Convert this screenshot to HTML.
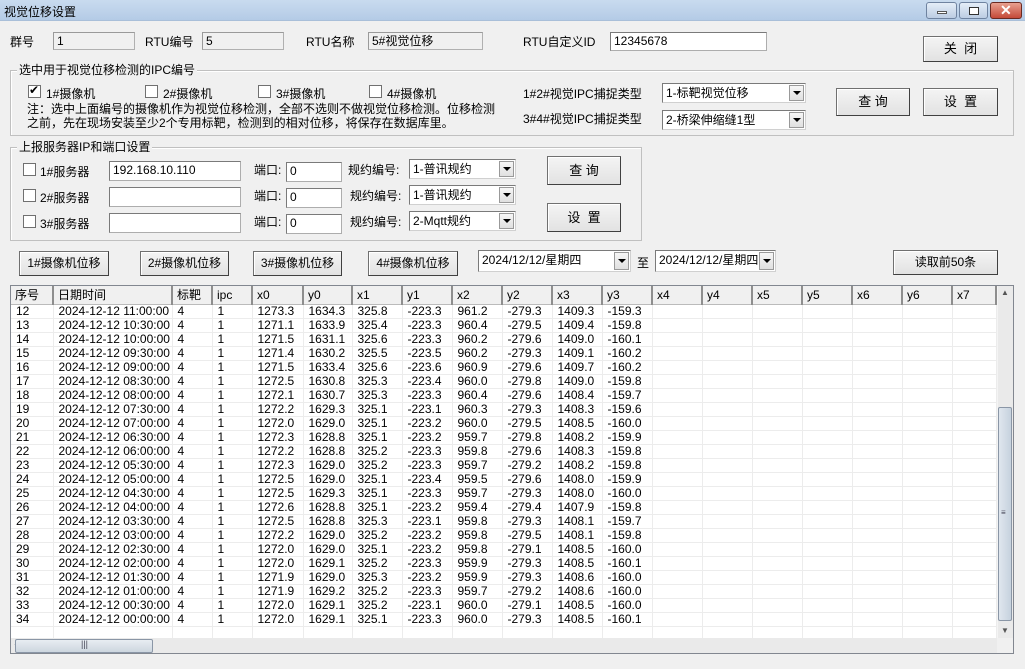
<!DOCTYPE html>
<html><head><meta charset="utf-8">
<style>
*{box-sizing:border-box;margin:0;padding:0}
body{width:1025px;height:669px;background:#f0f0f0;font-family:"Liberation Sans","Noto Sans CJK SC",sans-serif;font-size:12px;color:#000;position:relative;overflow:hidden}
.a{position:absolute;white-space:nowrap}
.title{left:0;top:0;width:1025px;height:21px;background:linear-gradient(#c9dbef,#b4cbe6);border-bottom:1px solid #a9bfd9}
.inp{position:absolute;background:#fff;border:1px solid #adadad;border-top-color:#7a7a7a;border-left-color:#7a7a7a;padding:2px 3px;line-height:13px;font-size:12px}
.ro{background:#f0f0f0;border:1px solid #b0b0b0;border-top-color:#9a9a9a;border-left-color:#9a9a9a}
.btn{position:absolute;background:linear-gradient(#f4f4f4,#e2e2e2);border:1px solid #707070;border-right-color:#404040;border-bottom-color:#404040;box-shadow:inset 1px 1px 0 #fff;text-align:center;font-size:13px}
.grp{position:absolute;border:1px solid #c0c0c0;box-shadow:inset 1px 1px 0 #fff}
.glab{position:absolute;background:#f0f0f0;padding:0 2px;top:-8px;left:6px;font-size:12px;line-height:14px}
.cb{position:absolute;width:13px;height:13px;background:#fff;border:1px solid #707070}
.sel{position:absolute;background:#fff;border:1px solid #7a7a7a;border-right-color:#d0d0d0;border-bottom-color:#d0d0d0;padding:2px 3px;line-height:14px}
.sel .dd{position:absolute;right:1px;top:1px;bottom:1px;width:15px;background:linear-gradient(#f6f6f6,#e0e0e0);border:1px solid #999}
.sel .dd svg{position:absolute;left:3px;top:50%;margin-top:-2px}
table{border-collapse:collapse;table-layout:fixed;position:absolute;left:11px;top:286px;font-size:12px}
th{height:18px;font-weight:normal;text-align:left;padding-left:4px;background:#f0f0f0;border-right:2px solid #8e8e8e;border-bottom:1px solid #bbb;line-height:16px}
td{height:14px;padding-left:5px;line-height:13px;border-right:1px solid #ececec;border-bottom:1px solid #ececec;background:#fff;white-space:nowrap;overflow:hidden}
</style></head><body>
<div class="a title"><span class="a" style="left:4px;top:3px;font-size:12px">视觉位移设置</span>
<div class="a" style="left:926px;top:2px;width:31px;height:17px;border:1px solid #6f83a0;border-radius:3px;background:linear-gradient(#e4edf8,#bccde3)"><div class="a" style="left:10px;top:8px;width:10px;height:3px;background:#fff;border:1px solid #555"></div></div>
<div class="a" style="left:959px;top:2px;width:29px;height:17px;border:1px solid #6f83a0;border-radius:3px;background:linear-gradient(#e4edf8,#bccde3)"><div class="a" style="left:9px;top:4px;width:10px;height:8px;border:1px solid #333;background:#fff"></div></div>
<div class="a" style="left:990px;top:2px;width:32px;height:17px;border:1px solid #6a2a22;border-radius:3px;background:linear-gradient(#e8a090,#c44a38)"><span class="a" style="left:9px;top:-1px;color:#fff;font-weight:bold;font-size:14px">✕</span></div>
</div>

<span class="a" style="left:10px;top:33px">群号</span>
<div class="inp ro" style="left:53px;top:32px;width:82px;height:18px">1</div>
<span class="a" style="left:145px;top:33px">RTU编号</span>
<div class="inp ro" style="left:202px;top:32px;width:82px;height:18px">5</div>
<span class="a" style="left:306px;top:33px">RTU名称</span>
<div class="inp ro" style="left:368px;top:32px;width:115px;height:18px">5#视觉位移</div>
<span class="a" style="left:523px;top:33px">RTU自定义ID</span>
<div class="inp" style="left:610px;top:32px;width:157px;height:19px">12345678</div>
<div class="btn" style="left:923px;top:36px;width:75px;height:26px;line-height:23px">关&nbsp;&nbsp;闭</div>

<div class="grp" style="left:10px;top:70px;width:1004px;height:66px"><span class="glab">选中用于视觉位移检测的IPC编号</span></div>
<div class="cb" style="left:28px;top:85px"><span class="a" style="left:0;top:-3px;font-size:12px">✔</span></div><span class="a" style="left:46px;top:85px">1#摄像机</span>
<div class="cb" style="left:145px;top:85px"></div><span class="a" style="left:163px;top:85px">2#摄像机</span>
<div class="cb" style="left:258px;top:85px"></div><span class="a" style="left:276px;top:85px">3#摄像机</span>
<div class="cb" style="left:369px;top:85px"></div><span class="a" style="left:387px;top:85px">4#摄像机</span>
<span class="a" style="left:27px;top:102px;line-height:14px">注：选中上面编号的摄像机作为视觉位移检测，全部不选则不做视觉位移检测。位移检测<br>之前，先在现场安装至少2个专用标靶，检测到的相对位移，将保存在数据库里。</span>
<span class="a" style="left:523px;top:85px">1#2#视觉IPC捕捉类型</span>
<span class="a" style="left:523px;top:110px">3#4#视觉IPC捕捉类型</span>
<div class="sel" style="left:662px;top:83px;width:144px;height:20px">1-标靶视觉位移<div class="dd"><svg width="8" height="4"><path d="M0 0H8L4 4Z"/></svg></div></div>
<div class="sel" style="left:662px;top:110px;width:144px;height:20px">2-桥梁伸缩缝1型<div class="dd"><svg width="8" height="4"><path d="M0 0H8L4 4Z"/></svg></div></div>
<div class="btn" style="left:836px;top:88px;width:74px;height:28px;line-height:26px">查&nbsp;询</div>
<div class="btn" style="left:923px;top:88px;width:75px;height:28px;line-height:26px">设&nbsp;&nbsp;置</div>

<div class="grp" style="left:10px;top:147px;width:632px;height:94px"><span class="glab">上报服务器IP和端口设置</span></div>
<div class="cb" style="left:23px;top:163px"></div><span class="a" style="left:40px;top:163px">1#服务器</span>
<div class="cb" style="left:23px;top:189px"></div><span class="a" style="left:40px;top:189px">2#服务器</span>
<div class="cb" style="left:23px;top:215px"></div><span class="a" style="left:40px;top:215px">3#服务器</span>
<div class="inp" style="left:109px;top:161px;width:132px;height:20px">192.168.10.110</div>
<div class="inp" style="left:109px;top:187px;width:132px;height:20px"></div>
<div class="inp" style="left:109px;top:213px;width:132px;height:20px"></div>
<span class="a" style="left:254px;top:161px">端口:</span><div class="inp" style="left:286px;top:162px;width:56px;height:20px">0</div>
<span class="a" style="left:254px;top:187px">端口:</span><div class="inp" style="left:286px;top:188px;width:56px;height:20px">0</div>
<span class="a" style="left:254px;top:213px">端口:</span><div class="inp" style="left:286px;top:214px;width:56px;height:20px">0</div>
<span class="a" style="left:348px;top:161px">规约编号:</span><div class="sel" style="left:409px;top:159px;width:107px;height:20px">1-普讯规约<div class="dd"><svg width="8" height="4"><path d="M0 0H8L4 4Z"/></svg></div></div>
<span class="a" style="left:350px;top:187px">规约编号:</span><div class="sel" style="left:409px;top:185px;width:107px;height:20px">1-普讯规约<div class="dd"><svg width="8" height="4"><path d="M0 0H8L4 4Z"/></svg></div></div>
<span class="a" style="left:350px;top:213px">规约编号:</span><div class="sel" style="left:409px;top:211px;width:107px;height:20px">2-Mqtt规约<div class="dd"><svg width="8" height="4"><path d="M0 0H8L4 4Z"/></svg></div></div>
<div class="btn" style="left:547px;top:156px;width:74px;height:29px;line-height:27px">查&nbsp;询</div>
<div class="btn" style="left:547px;top:203px;width:74px;height:29px;line-height:27px">设&nbsp;&nbsp;置</div>

<div class="btn" style="left:19px;top:251px;width:90px;height:25px;line-height:23px;font-size:12px">1#摄像机位移</div>
<div class="btn" style="left:140px;top:251px;width:89px;height:25px;line-height:23px;font-size:12px">2#摄像机位移</div>
<div class="btn" style="left:253px;top:251px;width:89px;height:25px;line-height:23px;font-size:12px">3#摄像机位移</div>
<div class="btn" style="left:368px;top:251px;width:90px;height:25px;line-height:23px;font-size:12px">4#摄像机位移</div>
<div class="sel" style="left:478px;top:250px;width:153px;height:22px">2024/12/12/星期四<div class="dd"><svg width="8" height="4"><path d="M0 0H8L4 4Z"/></svg></div></div>
<span class="a" style="left:637px;top:254px">至</span>
<div class="sel" style="left:655px;top:250px;width:121px;height:22px">2024/12/12/星期四<div class="dd"><svg width="8" height="4"><path d="M0 0H8L4 4Z"/></svg></div></div>
<div class="btn" style="left:893px;top:250px;width:105px;height:25px;line-height:23px;font-size:12px">读取前50条</div>

<div class="a" style="left:10px;top:285px;width:1004px;height:369px;border:1px solid #828790;background:#fff"></div>
<table>
<colgroup><col style="width:42px"><col style="width:119px"><col style="width:40px"><col style="width:40px"><col style="width:51px"><col style="width:49px"><col style="width:50px"><col style="width:50px"><col style="width:50px"><col style="width:50px"><col style="width:50px"><col style="width:50px"><col style="width:50px"><col style="width:50px"><col style="width:50px"><col style="width:50px"><col style="width:50px"><col style="width:50px"><col style="width:44px"></colgroup>
<tr><th>序号</th><th>日期时间</th><th>标靶</th><th>ipc</th><th>x0</th><th>y0</th><th>x1</th><th>y1</th><th>x2</th><th>y2</th><th>x3</th><th>y3</th><th>x4</th><th>y4</th><th>x5</th><th>y5</th><th>x6</th><th>y6</th><th>x7</th></tr>
<tr><td>12</td><td>2024-12-12 11:00:00</td><td>4</td><td>1</td><td>1273.3</td><td>1634.3</td><td>325.8</td><td>-223.3</td><td>961.2</td><td>-279.3</td><td>1409.3</td><td>-159.3</td><td></td><td></td><td></td><td></td><td></td><td></td><td></td></tr>
<tr><td>13</td><td>2024-12-12 10:30:00</td><td>4</td><td>1</td><td>1271.1</td><td>1633.9</td><td>325.4</td><td>-223.3</td><td>960.4</td><td>-279.5</td><td>1409.4</td><td>-159.8</td><td></td><td></td><td></td><td></td><td></td><td></td><td></td></tr>
<tr><td>14</td><td>2024-12-12 10:00:00</td><td>4</td><td>1</td><td>1271.5</td><td>1631.1</td><td>325.6</td><td>-223.3</td><td>960.2</td><td>-279.6</td><td>1409.0</td><td>-160.1</td><td></td><td></td><td></td><td></td><td></td><td></td><td></td></tr>
<tr><td>15</td><td>2024-12-12 09:30:00</td><td>4</td><td>1</td><td>1271.4</td><td>1630.2</td><td>325.5</td><td>-223.5</td><td>960.2</td><td>-279.3</td><td>1409.1</td><td>-160.2</td><td></td><td></td><td></td><td></td><td></td><td></td><td></td></tr>
<tr><td>16</td><td>2024-12-12 09:00:00</td><td>4</td><td>1</td><td>1271.5</td><td>1633.4</td><td>325.6</td><td>-223.6</td><td>960.9</td><td>-279.6</td><td>1409.7</td><td>-160.2</td><td></td><td></td><td></td><td></td><td></td><td></td><td></td></tr>
<tr><td>17</td><td>2024-12-12 08:30:00</td><td>4</td><td>1</td><td>1272.5</td><td>1630.8</td><td>325.3</td><td>-223.4</td><td>960.0</td><td>-279.8</td><td>1409.0</td><td>-159.8</td><td></td><td></td><td></td><td></td><td></td><td></td><td></td></tr>
<tr><td>18</td><td>2024-12-12 08:00:00</td><td>4</td><td>1</td><td>1272.1</td><td>1630.7</td><td>325.3</td><td>-223.3</td><td>960.4</td><td>-279.6</td><td>1408.4</td><td>-159.7</td><td></td><td></td><td></td><td></td><td></td><td></td><td></td></tr>
<tr><td>19</td><td>2024-12-12 07:30:00</td><td>4</td><td>1</td><td>1272.2</td><td>1629.3</td><td>325.1</td><td>-223.1</td><td>960.3</td><td>-279.3</td><td>1408.3</td><td>-159.6</td><td></td><td></td><td></td><td></td><td></td><td></td><td></td></tr>
<tr><td>20</td><td>2024-12-12 07:00:00</td><td>4</td><td>1</td><td>1272.0</td><td>1629.0</td><td>325.1</td><td>-223.2</td><td>960.0</td><td>-279.5</td><td>1408.5</td><td>-160.0</td><td></td><td></td><td></td><td></td><td></td><td></td><td></td></tr>
<tr><td>21</td><td>2024-12-12 06:30:00</td><td>4</td><td>1</td><td>1272.3</td><td>1628.8</td><td>325.1</td><td>-223.2</td><td>959.7</td><td>-279.8</td><td>1408.2</td><td>-159.9</td><td></td><td></td><td></td><td></td><td></td><td></td><td></td></tr>
<tr><td>22</td><td>2024-12-12 06:00:00</td><td>4</td><td>1</td><td>1272.2</td><td>1628.8</td><td>325.2</td><td>-223.3</td><td>959.8</td><td>-279.6</td><td>1408.3</td><td>-159.8</td><td></td><td></td><td></td><td></td><td></td><td></td><td></td></tr>
<tr><td>23</td><td>2024-12-12 05:30:00</td><td>4</td><td>1</td><td>1272.3</td><td>1629.0</td><td>325.2</td><td>-223.3</td><td>959.7</td><td>-279.2</td><td>1408.2</td><td>-159.8</td><td></td><td></td><td></td><td></td><td></td><td></td><td></td></tr>
<tr><td>24</td><td>2024-12-12 05:00:00</td><td>4</td><td>1</td><td>1272.5</td><td>1629.0</td><td>325.1</td><td>-223.4</td><td>959.5</td><td>-279.6</td><td>1408.0</td><td>-159.9</td><td></td><td></td><td></td><td></td><td></td><td></td><td></td></tr>
<tr><td>25</td><td>2024-12-12 04:30:00</td><td>4</td><td>1</td><td>1272.5</td><td>1629.3</td><td>325.1</td><td>-223.3</td><td>959.7</td><td>-279.3</td><td>1408.0</td><td>-160.0</td><td></td><td></td><td></td><td></td><td></td><td></td><td></td></tr>
<tr><td>26</td><td>2024-12-12 04:00:00</td><td>4</td><td>1</td><td>1272.6</td><td>1628.8</td><td>325.1</td><td>-223.2</td><td>959.4</td><td>-279.4</td><td>1407.9</td><td>-159.8</td><td></td><td></td><td></td><td></td><td></td><td></td><td></td></tr>
<tr><td>27</td><td>2024-12-12 03:30:00</td><td>4</td><td>1</td><td>1272.5</td><td>1628.8</td><td>325.3</td><td>-223.1</td><td>959.8</td><td>-279.3</td><td>1408.1</td><td>-159.7</td><td></td><td></td><td></td><td></td><td></td><td></td><td></td></tr>
<tr><td>28</td><td>2024-12-12 03:00:00</td><td>4</td><td>1</td><td>1272.2</td><td>1629.0</td><td>325.2</td><td>-223.2</td><td>959.8</td><td>-279.5</td><td>1408.1</td><td>-159.8</td><td></td><td></td><td></td><td></td><td></td><td></td><td></td></tr>
<tr><td>29</td><td>2024-12-12 02:30:00</td><td>4</td><td>1</td><td>1272.0</td><td>1629.0</td><td>325.1</td><td>-223.2</td><td>959.8</td><td>-279.1</td><td>1408.5</td><td>-160.0</td><td></td><td></td><td></td><td></td><td></td><td></td><td></td></tr>
<tr><td>30</td><td>2024-12-12 02:00:00</td><td>4</td><td>1</td><td>1272.0</td><td>1629.1</td><td>325.2</td><td>-223.3</td><td>959.9</td><td>-279.3</td><td>1408.5</td><td>-160.1</td><td></td><td></td><td></td><td></td><td></td><td></td><td></td></tr>
<tr><td>31</td><td>2024-12-12 01:30:00</td><td>4</td><td>1</td><td>1271.9</td><td>1629.0</td><td>325.3</td><td>-223.2</td><td>959.9</td><td>-279.3</td><td>1408.6</td><td>-160.0</td><td></td><td></td><td></td><td></td><td></td><td></td><td></td></tr>
<tr><td>32</td><td>2024-12-12 01:00:00</td><td>4</td><td>1</td><td>1271.9</td><td>1629.2</td><td>325.2</td><td>-223.3</td><td>959.7</td><td>-279.2</td><td>1408.6</td><td>-160.0</td><td></td><td></td><td></td><td></td><td></td><td></td><td></td></tr>
<tr><td>33</td><td>2024-12-12 00:30:00</td><td>4</td><td>1</td><td>1272.0</td><td>1629.1</td><td>325.2</td><td>-223.1</td><td>960.0</td><td>-279.1</td><td>1408.5</td><td>-160.0</td><td></td><td></td><td></td><td></td><td></td><td></td><td></td></tr>
<tr><td>34</td><td>2024-12-12 00:00:00</td><td>4</td><td>1</td><td>1272.0</td><td>1629.1</td><td>325.1</td><td>-223.3</td><td>960.0</td><td>-279.3</td><td>1408.5</td><td>-160.1</td><td></td><td></td><td></td><td></td><td></td><td></td><td></td></tr>
<tr><td></td><td></td><td></td><td></td><td></td><td></td><td></td><td></td><td></td><td></td><td></td><td></td><td></td><td></td><td></td><td></td><td></td><td></td><td></td></tr>
</table>
<div class="a" style="left:997px;top:286px;width:16px;height:352px;background:#eaeaea;border-left:1px solid #f4f4f4"></div>
<span class="a" style="left:1001px;top:288px;font-size:8px;color:#555">▲</span>
<div class="a" style="left:998px;top:407px;width:14px;height:214px;border:1px solid #8a96a6;border-radius:2px;background:linear-gradient(90deg,#dfe6ee,#c6d2de)"></div>
<span class="a" style="left:1001px;top:508px;font-size:8px;color:#445">≡</span>
<span class="a" style="left:1001px;top:626px;font-size:8px;color:#555">▼</span>
<div class="a" style="left:11px;top:638px;width:986px;height:15px;background:#eaeaea"></div>
<span class="a" style="left:14px;top:639px;font-size:8px;color:#555">◀</span>
<div class="a" style="left:15px;top:639px;width:138px;height:14px;border:1px solid #8a96a6;border-radius:2px;background:linear-gradient(#e8edf2,#cdd6df)"></div>
<span class="a" style="left:81px;top:639px;font-size:9px;color:#445">|||</span>
<span class="a" style="left:1001px;top:639px;font-size:8px;color:#555">▶</span>
<div class="a" style="left:997px;top:638px;width:16px;height:15px;background:#f0f0f0"></div>
</body></html>
